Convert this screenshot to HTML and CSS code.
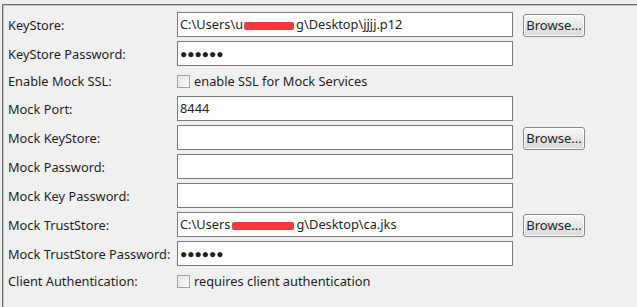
FILE: index.html
```html
<!DOCTYPE html>
<html lang="en">
<head>
  <meta charset="UTF-8" />
  <title>SSL Settings</title>
  <link rel="stylesheet" href="styles.css">
</head>
<body>
  <div class="panel">
    <div class="form">
      <label class="lbl">KeyStore:</label>
      <div class="field">C:\Users\u<span class="redact r1"></span>g\Desktop\jjjj.p12</div>
      <button class="browse">Browse...</button>

      <label class="lbl">KeyStore Password:</label>
      <div class="field pass">●●●●●●</div>

      <label class="lbl">Enable Mock SSL:</label>
      <div class="check"><span class="box"></span>enable SSL for Mock Services</div>

      <label class="lbl">Mock Port:</label>
      <div class="field">8444</div>

      <label class="lbl">Mock KeyStore:</label>
      <div class="field"></div>
      <button class="browse">Browse...</button>

      <label class="lbl">Mock Password:</label>
      <div class="field"></div>

      <label class="lbl">Mock Key Password:</label>
      <div class="field"></div>

      <label class="lbl">Mock TrustStore:</label>
      <div class="field">C:\Users<span class="redact r2"></span>g\Desktop\ca.jks</div>
      <button class="browse">Browse...</button>

      <label class="lbl">Mock TrustStore Password:</label>
      <div class="field pass">●●●●●●</div>

      <label class="lbl">Client Authentication:</label>
      <div class="check"><span class="box"></span>requires client authentication</div>
    </div>
  </div>
</body>
</html>
```

FILE: styles.css
```css
body {
  margin: 0;
  padding: 0;
  background: #f0f0f0;
  font-family: 'Noto Sans', 'Open Sans', sans-serif;
  font-size: 13px;
  color: #1e1e1e;
}
.panel {
  margin: 4px 0 0 2px;
  height: 303px;
  box-sizing: border-box;
  border-top: 1px solid #6a6a6a;
  border-left: 1px solid #6a6a6a;
  box-shadow: inset 1px 1px 0 #c8c8c8;
  padding: 7px 0 0 5px;
}
.form {
  display: grid;
  grid-template-columns: 159px 336px 62px;
  column-gap: 10px;
  row-gap: 4px;
  align-items: center;
}
.lbl {
  grid-column: 1;
  white-space: nowrap;
  font-size: 12.8px;
}
.field {
  grid-column: 2;
  height: 25px;
  box-sizing: border-box;
  border: 1px solid #7a7a7a;
  background: #fff;
  padding: 0 2px;
  line-height: 23px;
  font-size: 12.8px;
  white-space: nowrap;
  overflow: hidden;
}
.pass {
  font-size: 12px;
}
.redact {
  display: inline-block;
  height: 8px;
  background: #f43a3a;
  vertical-align: middle;
  border-radius: 2px;
}
.r1 { width: 50px; margin: 0 2px 0 1px; }
.r2 { width: 62px; margin: 0 2px 0 2px; }
.browse {
  grid-column: 3;
  height: 23px;
  margin-top: 1px;
  padding: 0;
  font-family: inherit;
  font-size: 13px;
  color: #1e1e1e;
  border: 1px solid #8a8a8a;
  border-radius: 3px;
  background: linear-gradient(#f8f8f8, #e6e6e6 50%, #dadada);
  box-shadow: inset 0 0 0 1px #fcfcfc;
}
.check {
  grid-column: 2 / 4;
  height: 22px;
  display: flex;
  align-items: center;
  gap: 4px;
  font-size: 12.8px;
}
.box {
  width: 13px;
  height: 13px;
  box-sizing: border-box;
  border: 1px solid #a2a2a2;
  background: linear-gradient(135deg, #e6e6e6, #fbfbfb);
}
```
